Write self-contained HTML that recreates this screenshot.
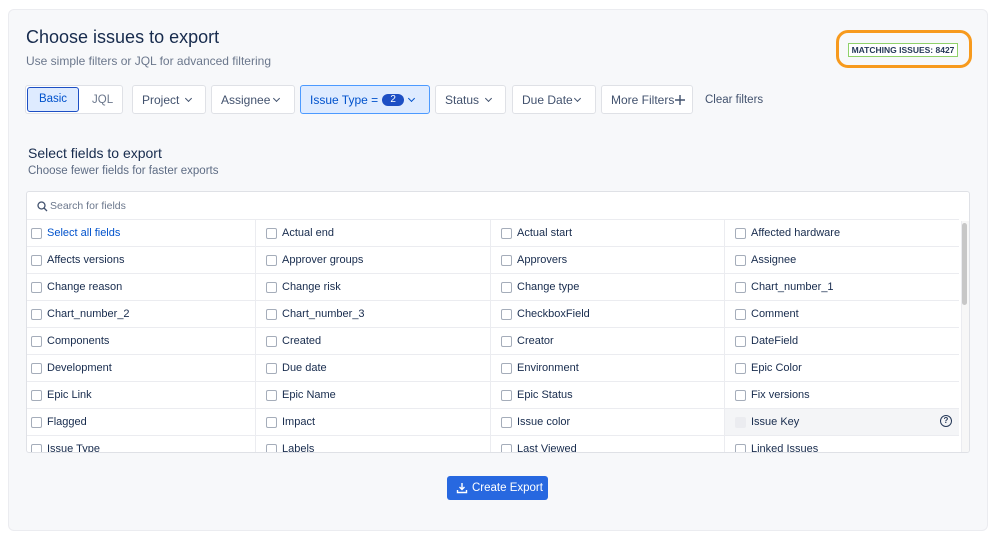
<!DOCTYPE html>
<html><head><meta charset="utf-8"><style>
*{box-sizing:border-box;margin:0;padding:0}
body{width:999px;height:541px;background:#fff;font-family:"Liberation Sans",Arial,sans-serif;position:relative;overflow:hidden;color:#172b4d}
.card{position:absolute;left:8px;top:9px;width:980px;height:522px;background:#f7f8fa;border:1px solid #ebecf0;border-radius:6px}
.a{position:absolute}
.btn{position:absolute;top:85px;height:29px;background:#fff;border:1px solid #dfe1e6;border-radius:3px;font-size:12px;color:#42526e;display:flex;align-items:center;padding-left:9px}
.chev{position:absolute;width:5px;height:5px;border-right:1.5px solid #42526e;border-bottom:1.5px solid #42526e;transform:rotate(45deg);top:10px}
.tbl{position:absolute;left:26px;top:191px;width:944px;height:262px;background:#fff;border:1px solid #dfe1e6;border-radius:3px;overflow:hidden}
.row{position:absolute;left:0;width:932px;height:27px;border-top:1px solid #ebecf0}
.cell{position:absolute;top:0;height:27px;font-size:11px;color:#172b4d;line-height:26px;padding-left:20px}
.cell i{position:absolute;left:4px;top:8px;width:11px;height:11px;border:1px solid #a5adba;border-radius:2px}
.vl{position:absolute;top:28px;width:1px;height:240px;background:#ebecf0}
</style></head><body>
<div class="card"></div>
<div class="a" style="left:26px;top:27px;font-size:18px;color:#172b4d">Choose issues to export</div>
<div class="a" style="left:26px;top:54px;font-size:12px;color:#6b778c">Use simple filters or JQL for advanced filtering</div>
<div class="a" style="left:836px;top:30px;width:136px;height:38px;border:3px solid #f79a1d;border-radius:12px"></div>
<div class="a" style="left:848px;top:43px;width:110px;height:14px;border:1px solid #8fd16a;background:#fff;font-size:8.5px;font-weight:bold;color:#253858;text-align:center;line-height:12px;white-space:nowrap">MATCHING ISSUES: 8427</div>

<div class="a" style="left:25px;top:85px;width:98px;height:29px;border:1px solid #dfe1e6;border-radius:3px;background:#fff"></div>
<div class="a" style="left:27px;top:87px;width:52px;height:25px;border:1px solid #1d4fc4;border-radius:3px;background:#deebff;font-size:11.5px;color:#0052cc;text-align:center;line-height:23px">Basic</div>
<div class="a" style="left:92px;top:94px;font-size:11.5px;color:#6b778c">JQL</div>
<div class="btn" style="left:132px;width:74px">Project<span class="chev" style="left:53px"></span></div>
<div class="btn" style="left:211px;width:84px">Assignee<span class="chev" style="left:62px"></span></div>
<div class="btn" style="left:300px;width:130px;background:#deebff;border-color:#4c9aff;color:#0052cc">Issue Type =<span style="display:inline-block;margin-left:4px;background:#1d4fc4;color:#fff;border-radius:8px;width:22px;height:12px;font-size:10px;line-height:12px;text-align:center">2</span><span class="chev" style="left:108px;border-color:#0052cc"></span></div>
<div class="btn" style="left:435px;width:71px">Status<span class="chev" style="left:50px"></span></div>
<div class="btn" style="left:512px;width:84px">Due Date<span class="chev" style="left:62px"></span></div>
<div class="btn" style="left:601px;width:92px">More Filters<svg style="position:absolute;left:73px;top:9px" width="10" height="10" viewBox="0 0 10 10" stroke="#42526e" stroke-width="1.4"><path d="M5 0v10M0 5h10"/></svg></div>
<div class="a" style="left:705px;top:94px;font-size:11.5px;color:#42526e">Clear filters</div>

<div class="a" style="left:28px;top:145px;font-size:14px;color:#172b4d">Select fields to export</div>
<div class="a" style="left:28px;top:165px;font-size:11.5px;color:#5e6c84">Choose fewer fields for faster exports</div>

<div class="tbl">
<svg class="a" style="left:10px;top:9px" width="11" height="11" viewBox="0 0 11 11"><circle cx="4.5" cy="4.5" r="3.5" fill="none" stroke="#42526e" stroke-width="1.3"/><line x1="7" y1="7" x2="10" y2="10" stroke="#42526e" stroke-width="1.3"/></svg>
<div class="a" style="left:23px;top:8px;font-size:10.5px;color:#6b778c">Search for fields</div>
<div class="a" style="left:934px;top:29px;width:8px;height:232px;background:#f7f7f7;border-left:1px solid #ebecf0"></div>
<div class="a" style="left:935px;top:31px;width:5px;height:82px;background:#c7c7c7;border-radius:3px"></div>
<div class="row" style="top:27px"></div><div class="row" style="top:54px"></div><div class="row" style="top:81px"></div><div class="row" style="top:108px"></div><div class="row" style="top:135px"></div><div class="row" style="top:162px"></div><div class="row" style="top:189px"></div><div class="row" style="top:216px;"></div><div class="row" style="top:243px"></div>
<div class="a" style="left:697px;top:217px;width:235px;height:26px;background:#f4f5f7"></div>
<div class="vl" style="left:228px"></div><div class="vl" style="left:463px"></div><div class="vl" style="left:697px"></div>
<div id="cells"></div>
</div>

<div class="a" style="left:447px;top:476px;width:101px;height:24px;background:#2768e0;border-radius:3px;color:#fff;font-size:11.5px;line-height:24px;padding-left:25px;white-space:nowrap">Create Export</div>
<svg class="a" style="left:456px;top:482px" width="12" height="12" viewBox="0 0 12 12" fill="none" stroke="#fff" stroke-width="1.4"><path d="M6 1v6M3.5 5L6 7.5 8.5 5M1.5 8v2.5h9V8"/></svg>
<script>
var d=[["Select all fields","Actual end","Actual start","Affected hardware"],["Affects versions","Approver groups","Approvers","Assignee"],["Change reason","Change risk","Change type","Chart_number_1"],["Chart_number_2","Chart_number_3","CheckboxField","Comment"],["Components","Created","Creator","DateField"],["Development","Due date","Environment","Epic Color"],["Epic Link","Epic Name","Epic Status","Fix versions"],["Flagged","Impact","Issue color","Issue Key"],["Issue Type","Labels","Last Viewed","Linked Issues"]];
var xs=[0,235,470,704],h="";
d.forEach(function(r,i){r.forEach(function(t,j){var st="left:"+xs[j]+"px;top:"+(28+27*i)+"px";var c=i==0&&j==0?";color:#0052cc":"";var box=(i==7&&j==3)?'<i style="border-color:#ebecf0;background:#ebecf0"></i>':'<i></i>';h+='<div class="cell" style="'+st+c+'">'+box+t+'</div>';});});
h+='<div class="a" style="left:913px;top:223px;width:12px;height:12px;border:1.3px solid #253858;border-radius:50%;font-size:8px;font-weight:bold;text-align:center;line-height:10px;color:#253858">?</div>';
document.getElementById("cells").innerHTML=h;
</script>
</body></html>
